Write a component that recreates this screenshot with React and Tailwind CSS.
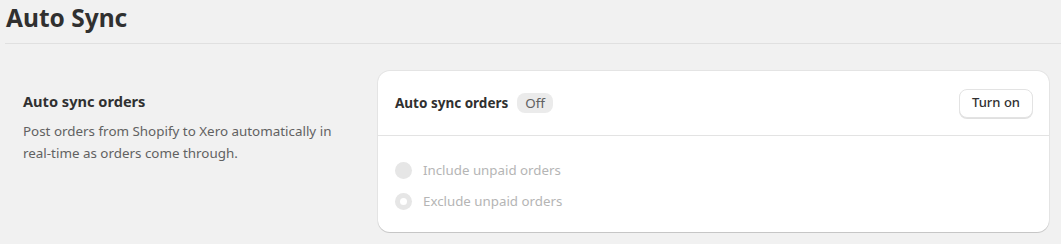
export default function App() {
    return (
        <div className="min-h-[244px] w-[1061px] bg-[#f1f1f1] text-[#303030]" style={{ fontFamily: '"Noto Sans", "Open Sans", sans-serif' }}>
            {/* Page header */}
            <div className="pl-[5px]">
                <h1 className="pl-[1px] pt-[1px] text-[24.5px] font-bold leading-[34px] text-[#303030]">Auto Sync</h1>
                <div className="mt-[8px] h-px bg-[#e0e0e0]" />
            </div>

            {/* Settings section */}
            <div className="flex pl-[23px] pr-[12px] pt-[27px]">
                <div className="w-[355px] shrink-0 pt-[20px]">
                    <h2 className="text-[14.6px] font-bold leading-[20px] text-[#303030]">Auto sync orders</h2>
                    <p className="mt-[9px] w-[320px] text-[13.4px] leading-[22px] text-[#616161]">
                        Post orders from Shopify to Xero automatically in real-time as orders come through.
                    </p>
                </div>

                <div className="flex-1 overflow-hidden rounded-xl bg-white shadow-[0_1px_0_0_rgba(0,0,0,0.13),0_0_0_1px_rgba(0,0,0,0.05)]">
                    <div className="flex h-[65px] items-center justify-between border-b border-[#e3e3e3] pl-[17px] pr-[16px]">
                        <div className="flex items-center gap-[9px]">
                            <span className="text-[13.5px] font-bold text-[#303030]">Auto sync orders</span>
                            <span className="rounded-lg bg-[#ebebeb] px-[8px] py-[1px] text-[13.4px] leading-[18px] text-[#616161]">Off</span>
                        </div>
                        <button className="h-[29px] rounded-lg border border-[#e3e3e3] bg-white px-[12px] text-[13px] font-medium text-[#303030] shadow-[0_1px_0_0_rgba(0,0,0,0.12)]">
                            Turn on
                        </button>
                    </div>
                    <div className="flex flex-col gap-[13px] pb-[22px] pl-[17px] pt-[25px]">
                        <label className="flex items-center gap-[11px] text-[13.3px] leading-[18px] text-[#b5b5b5]">
                            <span className="h-[17px] w-[17px] rounded-full bg-[#e6e6e6]" />
                            Include unpaid orders
                        </label>
                        <label className="flex items-center gap-[11px] text-[13.3px] leading-[18px] text-[#b5b5b5]">
                            <span className="flex h-[17px] w-[17px] items-center justify-center rounded-full bg-[#e6e6e6]">
                                <span className="h-[7px] w-[7px] rounded-full bg-white" />
                            </span>
                            Exclude unpaid orders
                        </label>
                    </div>
                </div>
            </div>
        </div>
    );
}
